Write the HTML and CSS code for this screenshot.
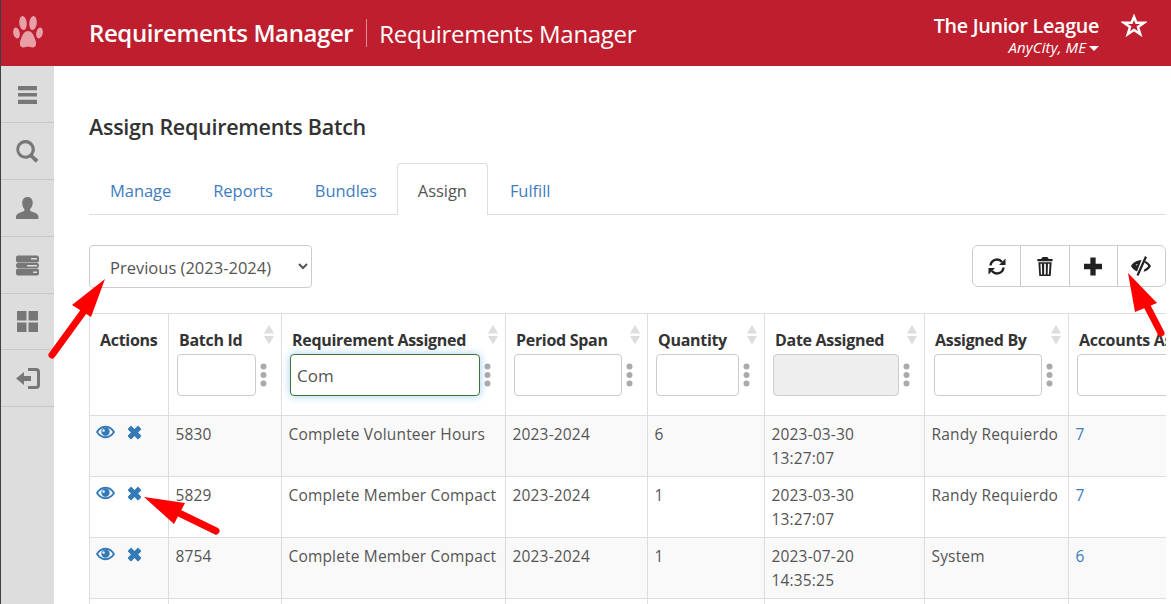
FILE: index.html
```html
<!DOCTYPE html>
<html lang="en">
<head>
<meta charset="utf-8">
<title>Requirements Manager</title>
<link rel="stylesheet" href="styles.css">
</head>
<body>
<svg class="defs" width="0" height="0" aria-hidden="true">
  <symbol id="eye" viewBox="0 0 20 16"><path fill-rule="evenodd" d="M10 1.500C5.500 1.500 2 4.500 0 8c2 3.500 5.500 6.500 10 6.500s8-3 10-6.500c-2-3.500-5.500-6.500-10-6.500zM10 3.500C6.500 3.500 3.800 5.500 2.300 8c1.500 2.500 4.200 4.500 7.700 4.500s6.200-2 7.700-4.500C16.200 5.500 13.500 3.500 10 3.500z"/><path fill-rule="evenodd" d="M10 3.200a4.400 4.400 0 1 1-.01 0zM8 5.200a1.300 1.300 0 1 0 .01 0z"/></symbol>
  <symbol id="cross" viewBox="0 0 16 16"><path d="M5 1.200 8 4.200 11 1.200c.4-.4 1-.4 1.400 0l2.400 2.400c.4.400.4 1 0 1.400L11.800 8l3 3c.4.400.4 1 0 1.400l-2.400 2.400c-.4.400-1 .4-1.400 0L8 11.800l-3 3c-.4.400-1 .4-1.400 0l-2.400-2.400c-.4-.4-.4-1 0-1.400l3-3-3-3c-.4-.4-.4-1 0-1.400l2.400-2.400c.4-.4 1-.4 1.400 0z"/></symbol>
  <symbol id="sort" viewBox="0 0 10 20"><path d="M5 0 10 8.500H0zM0 11h10l-5 8.500z"/></symbol>
  <symbol id="dots" viewBox="0 0 7 24"><circle cx="3.500" cy="3.500" r="3"/><circle cx="3.500" cy="12" r="3"/><circle cx="3.500" cy="20.500" r="3"/></symbol>
</svg>

<header class="topbar">
  <div class="brand">
    <svg class="paw" viewBox="0 0 30 36"><g fill="#e8a0a8"><ellipse cx="3.500" cy="18" rx="3.200" ry="5.500" transform="rotate(-12 3.500 18)"/><ellipse cx="10" cy="8" rx="3.700" ry="7" transform="rotate(-6 10 8)"/><ellipse cx="20" cy="8" rx="3.700" ry="7" transform="rotate(6 20 8)"/><ellipse cx="26.500" cy="18" rx="3.200" ry="5.500" transform="rotate(12 26.500 18)"/><path d="M15 16c-4 0-5.500 4-7 8-1.500 3-2 8 2 8.500 2 .2 3.500-1 5-1s3 1.200 5 1c4-.5 3.500-5.500 2-8.500-1.500-4-3-8-7-8z"/></g></svg>
  </div>
  <div class="titles">
    <span class="app-title">Requirements Manager</span>
    <span class="page-title">Requirements Manager</span>
  </div>
  <div class="org">
    <div class="org-name">The Junior League</div>
    <div class="org-city">AnyCity, ME<span class="caret"></span></div>
  </div>
  <svg class="star" viewBox="0 0 26 24"><path fill="none" stroke="#fff" stroke-width="2.500" d="M13 3.800 15.400 9.800H23l-6 4.300 2.200 7L13 16.900l-6.200 4.200 2.200-7-6-4.300h7.600z"/></svg>
</header>

<div class="layout">
  <nav class="sidebar">
    <a class="side-item"><svg class="side-sm" viewBox="0 0 20 20"><path d="M1 2h18v4H1zM1 8.500h18v3.500H1zM1 15h18v4H1z"/></svg></a>
    <a class="side-item"><svg viewBox="0 0 22 22"><path fill-rule="evenodd" d="M9 0a9 9 0 0 1 7.200 14.400l5.300 4.600-2.600 2.800-5.100-5A9 9 0 1 1 9 0zm0 3a6 6 0 1 0 0 12A6 6 0 0 0 9 3z"/></svg></a>
    <a class="side-item"><svg viewBox="0 0 22 22"><path d="M11 0c3.500 0 5 2.500 5 5.500 0 2.500-1 4.500-2.500 6-.4 1.500 0 2 2 2.700 3.500 1.300 6 2 6 5.300v1.500H0v-1.500c0-3.300 2.500-4 6-5.300 2-.7 2.400-1.200 2-2.700C6.500 10 6 8 6 5.500 6 2.500 7.500 0 11 0z"/></svg></a>
    <a class="side-item"><svg viewBox="0 0 23 20"><path fill-rule="evenodd" d="M2 0h19a2 2 0 0 1 2 2v3a2 2 0 0 1-2 2H2a2 2 0 0 1-2-2V2a2 2 0 0 1 2-2zm13 2.500V4h6V2.500zM2 7.500h19a2 2 0 0 1 2 2v1a2 2 0 0 1-2 2H2a2 2 0 0 1-2-2v-1a2 2 0 0 1 2-2zm9 2V11h10V9.500zM2 13h19a2 2 0 0 1 2 2v3a2 2 0 0 1-2 2H2a2 2 0 0 1-2-2v-3a2 2 0 0 1 2-2zm15 3v1.500h4V16z"/></svg></a>
    <a class="side-item side-short"><svg class="side-sm" viewBox="0 0 21 21"><path d="M0 0h9.500v9.500H0zM11.500 0H21v9.500h-9.500zM0 11.500h9.500V21H0zM11.500 11.500H21V21h-9.500z"/></svg></a>
    <a class="side-item"><svg class="side-lg" viewBox="0 0 24 21"><path d="M0 10.500 8 4v4h7v5H8v4zM12 0h8a4 4 0 0 1 4 4v13a4 4 0 0 1-4 4h-8v-3h8a1 1 0 0 0 1-1V4a1 1 0 0 0-1-1h-8z"/></svg></a>
  </nav>

  <main class="content">
    <h1 class="heading">Assign Requirements Batch</h1>

    <ul class="tabs">
      <li class="tab">Manage</li>
      <li class="tab">Reports</li>
      <li class="tab">Bundles</li>
      <li class="tab active">Assign</li>
      <li class="tab">Fulfill</li>
    </ul>

    <div class="toolbar">
      <select class="period">
        <option>Previous (2023-2024)</option>
      </select>
      <div class="btn-group">
        <button class="tool"><svg viewBox="0 0 18 18"><path fill="none" stroke="#222" stroke-width="2.400" d="M2.500 8A6.500 6.500 0 0 1 14 4.500M15.500 10A6.500 6.500 0 0 1 4 13.500"/><path fill="#222" d="M17.500 1v6.500H11zM.5 17v-6.500H7z"/></svg></button>
        <button class="tool"><svg viewBox="0 0 16 20"><path fill="#222" fill-rule="evenodd" d="M5.500 0h5L12 2h4v2.500H0V2h4zM1 5.500h14L14 20H2zm2.200 1.500.5 11.500h1.300L4.700 7zm3.900 0v11.500h1.800V7zm4 0-.3 11.500h1.300L12.800 7z"/></svg></button>
        <button class="tool"><svg viewBox="0 0 17 17"><path fill="#222" d="M6 0h5v6h6v5h-6v6H6v-6H0V6h6z"/></svg></button>
        <button class="tool tool-eye"><svg viewBox="0 0 20 20"><path fill="#222" d="M14 0 16 1.200 7.500 20 5.500 19zM0 10C2 6.500 5 4.500 10.500 4L6 15.500C3.500 14.500 1.300 12.500 0 10zM14.500 5C17 6 18.800 8 20 10c-1.500 3-4 5-7.500 5.800l1-2.600c1.800-.7 3-1.800 3.800-3.200-.8-1.300-2-2.400-3.600-3.200z"/><path fill="#fff" d="M4.500 8.700 6.500 8 6 9.500z"/></svg></button>
      </div>
    </div>

    <div class="table-wrap">
    <table class="grid">
      <colgroup>
        <col class="c-actions"><col class="c-batch"><col class="c-req"><col class="c-period"><col class="c-qty"><col class="c-date"><col class="c-by"><col class="c-acc">
      </colgroup>
      <thead>
        <tr>
          <th>Actions</th>
          <th>
            <span class="th-label">Batch Id</span><svg class="sort"><use href="#sort"/></svg>
            <div class="filter"><input class="f-input f-batch"><svg class="dots"><use href="#dots"/></svg></div>
          </th>
          <th>
            <span class="th-label">Requirement Assigned</span><svg class="sort"><use href="#sort"/></svg>
            <div class="filter"><input class="f-input f-req focus" value="Com"><svg class="dots"><use href="#dots"/></svg></div>
          </th>
          <th>
            <span class="th-label">Period Span</span><svg class="sort"><use href="#sort"/></svg>
            <div class="filter"><input class="f-input f-period"><svg class="dots"><use href="#dots"/></svg></div>
          </th>
          <th>
            <span class="th-label">Quantity</span><svg class="sort"><use href="#sort"/></svg>
            <div class="filter"><input class="f-input f-qty"><svg class="dots"><use href="#dots"/></svg></div>
          </th>
          <th>
            <span class="th-label">Date Assigned</span><svg class="sort"><use href="#sort"/></svg>
            <div class="filter"><input class="f-input f-date" disabled><svg class="dots"><use href="#dots"/></svg></div>
          </th>
          <th>
            <span class="th-label">Assigned By</span><svg class="sort"><use href="#sort"/></svg>
            <div class="filter"><input class="f-input f-by"><svg class="dots"><use href="#dots"/></svg></div>
          </th>
          <th>
            <span class="th-label">Accounts Assigned</span>
            <div class="filter"><input class="f-input f-acc"></div>
          </th>
        </tr>
      </thead>
      <tbody>
        <tr>
          <td class="acts"><svg class="i-eye"><use href="#eye"/></svg><svg class="i-x"><use href="#cross"/></svg></td>
          <td>5830</td><td>Complete Volunteer Hours</td><td>2023-2024</td><td>6</td><td>2023-03-30<br>13:27:07</td><td>Randy Requierdo</td><td><a class="link">7</a></td>
        </tr>
        <tr>
          <td class="acts"><svg class="i-eye"><use href="#eye"/></svg><svg class="i-x"><use href="#cross"/></svg></td>
          <td>5829</td><td>Complete Member Compact</td><td>2023-2024</td><td>1</td><td>2023-03-30<br>13:27:07</td><td>Randy Requierdo</td><td><a class="link">7</a></td>
        </tr>
        <tr>
          <td class="acts"><svg class="i-eye"><use href="#eye"/></svg><svg class="i-x"><use href="#cross"/></svg></td>
          <td>8754</td><td>Complete Member Compact</td><td>2023-2024</td><td>1</td><td>2023-07-20<br>14:35:25</td><td>System</td><td><a class="link">6</a></td>
        </tr>
        <tr>
          <td class="acts"></td><td></td><td></td><td></td><td></td><td></td><td></td><td></td>
        </tr>
      </tbody>
    </table>
    </div>
  </main>
</div>

<svg class="arrows" viewBox="0 0 1171 604" aria-hidden="true">
  <g fill="#fe0000" stroke="#fe0000" stroke-linecap="round">
    <path fill="none" stroke-width="7" d="M52 355 84 311"/>
    <path stroke="none" d="M105 279 72 305 91 317z"/>
    <path fill="none" stroke-width="7" d="M216 531 175 511"/>
    <path stroke="none" d="M144 497 185 503 174 524z"/>
    <path fill="none" stroke-width="7" d="M1161 333 1146 304"/>
    <path stroke="none" d="M1128 273 1157 303 1135 312z"/>
  </g>
</svg>
</body>
</html>
```

FILE: styles.css
```css
* { box-sizing: border-box; }
html, body { margin: 0; height: 100%; overflow: hidden; background: #fff; }
body { font-family: "Open Sans", "Noto Sans", "Liberation Sans", sans-serif; font-size: 16px; color: #333; position: relative; }
.defs { position: absolute; }

.topbar { height: 66px; background: #be1e2d; color: #fff; display: flex; align-items: center; border-left: 1px solid #3c4043; }
.brand { width: 88px; display: flex; padding-left: 12px; }
.paw { width: 30px; height: 36px; margin-top: -1px; }
.titles { flex: 1; display: flex; align-items: center; }
.app-title { font-size: 24px; font-weight: 600; letter-spacing: -.4px; padding-right: 13px; border-right: 1px solid #e08a93; line-height: 28px; }
.page-title { font-size: 24px; padding-left: 12px; letter-spacing: -.3px; }
.org { text-align: right; margin-right: 22px; margin-top: 3px; }
.org-name { font-size: 19.700px; font-weight: 600; line-height: 24px; letter-spacing: -.3px; }
.org-city { font-size: 15px; font-style: italic; line-height: 18px; letter-spacing: .1px; }
.caret { display: inline-block; margin-left: 3px; vertical-align: middle; border: 5px solid transparent; border-top-color: #fff; border-bottom: 0; }
.star { width: 26px; height: 24px; margin-right: 24px; margin-bottom: 17px; }

.layout { display: flex; height: 538px; }
.sidebar { width: 54px; background: #ddd; border-left: 1px solid #3c4043; flex: none; display: flex; flex-direction: column; }
.side-item { height: 57px; border-bottom: 1px solid #c8c8c8; display: flex; align-items: center; justify-content: center; }
.side-short { height: 56px; }
.side-item svg { width: 23px; height: 23px; fill: #777; }
.side-item .side-sm { width: 21px; height: 21px; }
.side-item .side-lg { width: 24px; height: 21px; }

.content { flex: 1; min-width: 0; padding: 0 5px 0 35px; }
.heading { margin: 47px 0 0; font-size: 21.500px; font-weight: 600; line-height: 28px; color: #333; letter-spacing: -.27px; }

.tabs { list-style: none; margin: 22px 0 0; padding: 0; display: flex; height: 52px; border-bottom: 1px solid #ddd; }
.tab { padding: 0 20px; line-height: 54px; height: 52px; color: #3f7cbf; font-size: 16.500px; letter-spacing: -.05px; border: 1px solid transparent; border-bottom: 0; border-radius: 4px 4px 0 0; }
.tab.active { color: #555; background: #fff; border-color: #ddd; height: 52px; margin: 0 1px -1px -1px; }

.toolbar { display: flex; justify-content: space-between; align-items: flex-start; margin-top: 30px; height: 68px; }
.period { width: 223px; height: 43px; padding: 2px 0 0 16px; font: 16.500px "Open Sans", sans-serif; letter-spacing: 0; color: #555; background-color: #fff; border: 1px solid #ccc; border-radius: 4px; }
.btn-group { display: flex; height: 42px; width: 194px; border: 1px solid #ccc; border-radius: 6px; }
.tool { flex: 1; padding: 0; background: #fff; border: 0; border-left: 1px solid #ccc; display: flex; align-items: center; justify-content: center; border-radius: 0; }
.tool:first-child { border-left: 0; border-radius: 6px 0 0 6px; }
.tool:last-child { border-radius: 0 6px 6px 0; }
.tool svg { width: 18px; height: 19px; }
.tool-eye svg { width: 20px; height: 20px; }

.table-wrap { overflow: hidden; }
.grid { table-layout: fixed; border-collapse: collapse; width: 1129px; font-size: 16px; }
.c-actions { width: 79px; } .c-batch { width: 113px; } .c-req { width: 224px; } .c-period { width: 142px; }
.c-qty { width: 117px; } .c-date { width: 160px; } .c-by { width: 144px; } .c-acc { width: 150px; }
.grid th, .grid td { border: 1px solid #ddd; vertical-align: top; text-align: left; }
.grid th { height: 102px; padding: 14px 10px 0; font-weight: 700; font-size: 16px; position: relative; white-space: nowrap; letter-spacing: -.3px; line-height: 24px; color: #333; }
.grid td { height: 61px; padding: 6px 6.500px 0; line-height: 24px; letter-spacing: .17px; color: #555; font-size: 15.500px; }
.grid tbody tr:nth-child(odd) td { background: #f9f9f9; }
.sort { position: absolute; top: 11px; right: 7px; width: 10px; height: 20px; fill: #ddd; }
.filter { display: flex; align-items: center; margin: 2px 0 0 -2px; }
.f-input { height: 42px; padding: 0 6px; font: 17px "Open Sans", sans-serif; color: #555; border: 1px solid #ccc; border-radius: 4px; background: #fff; }
.f-batch { width: 79px; } .f-req { width: 190px; } .f-period { width: 108px; } .f-qty { width: 83px; } .f-date { width: 126px; background: #eee; } .f-by { width: 108px; margin-left: 1px; } .f-acc { width: 140px; }
.focus { border-color: #3c763d; box-shadow: 0 0 8px rgba(102,175,233,.6); }
.dots { width: 7px; height: 24px; fill: #aaa; margin-left: 4px; }
.acts { white-space: nowrap; }
.i-eye { width: 19px; height: 16px; fill: #337ab7; margin: 2px 0 0 -1px; }
.i-x { width: 15px; height: 15px; fill: #337ab7; margin: 2px 0 0 12px; }
.link { color: #3f7cbf; }
.arrows { position: absolute; left: 0; top: 0; width: 1171px; height: 604px; pointer-events: none; }
```
